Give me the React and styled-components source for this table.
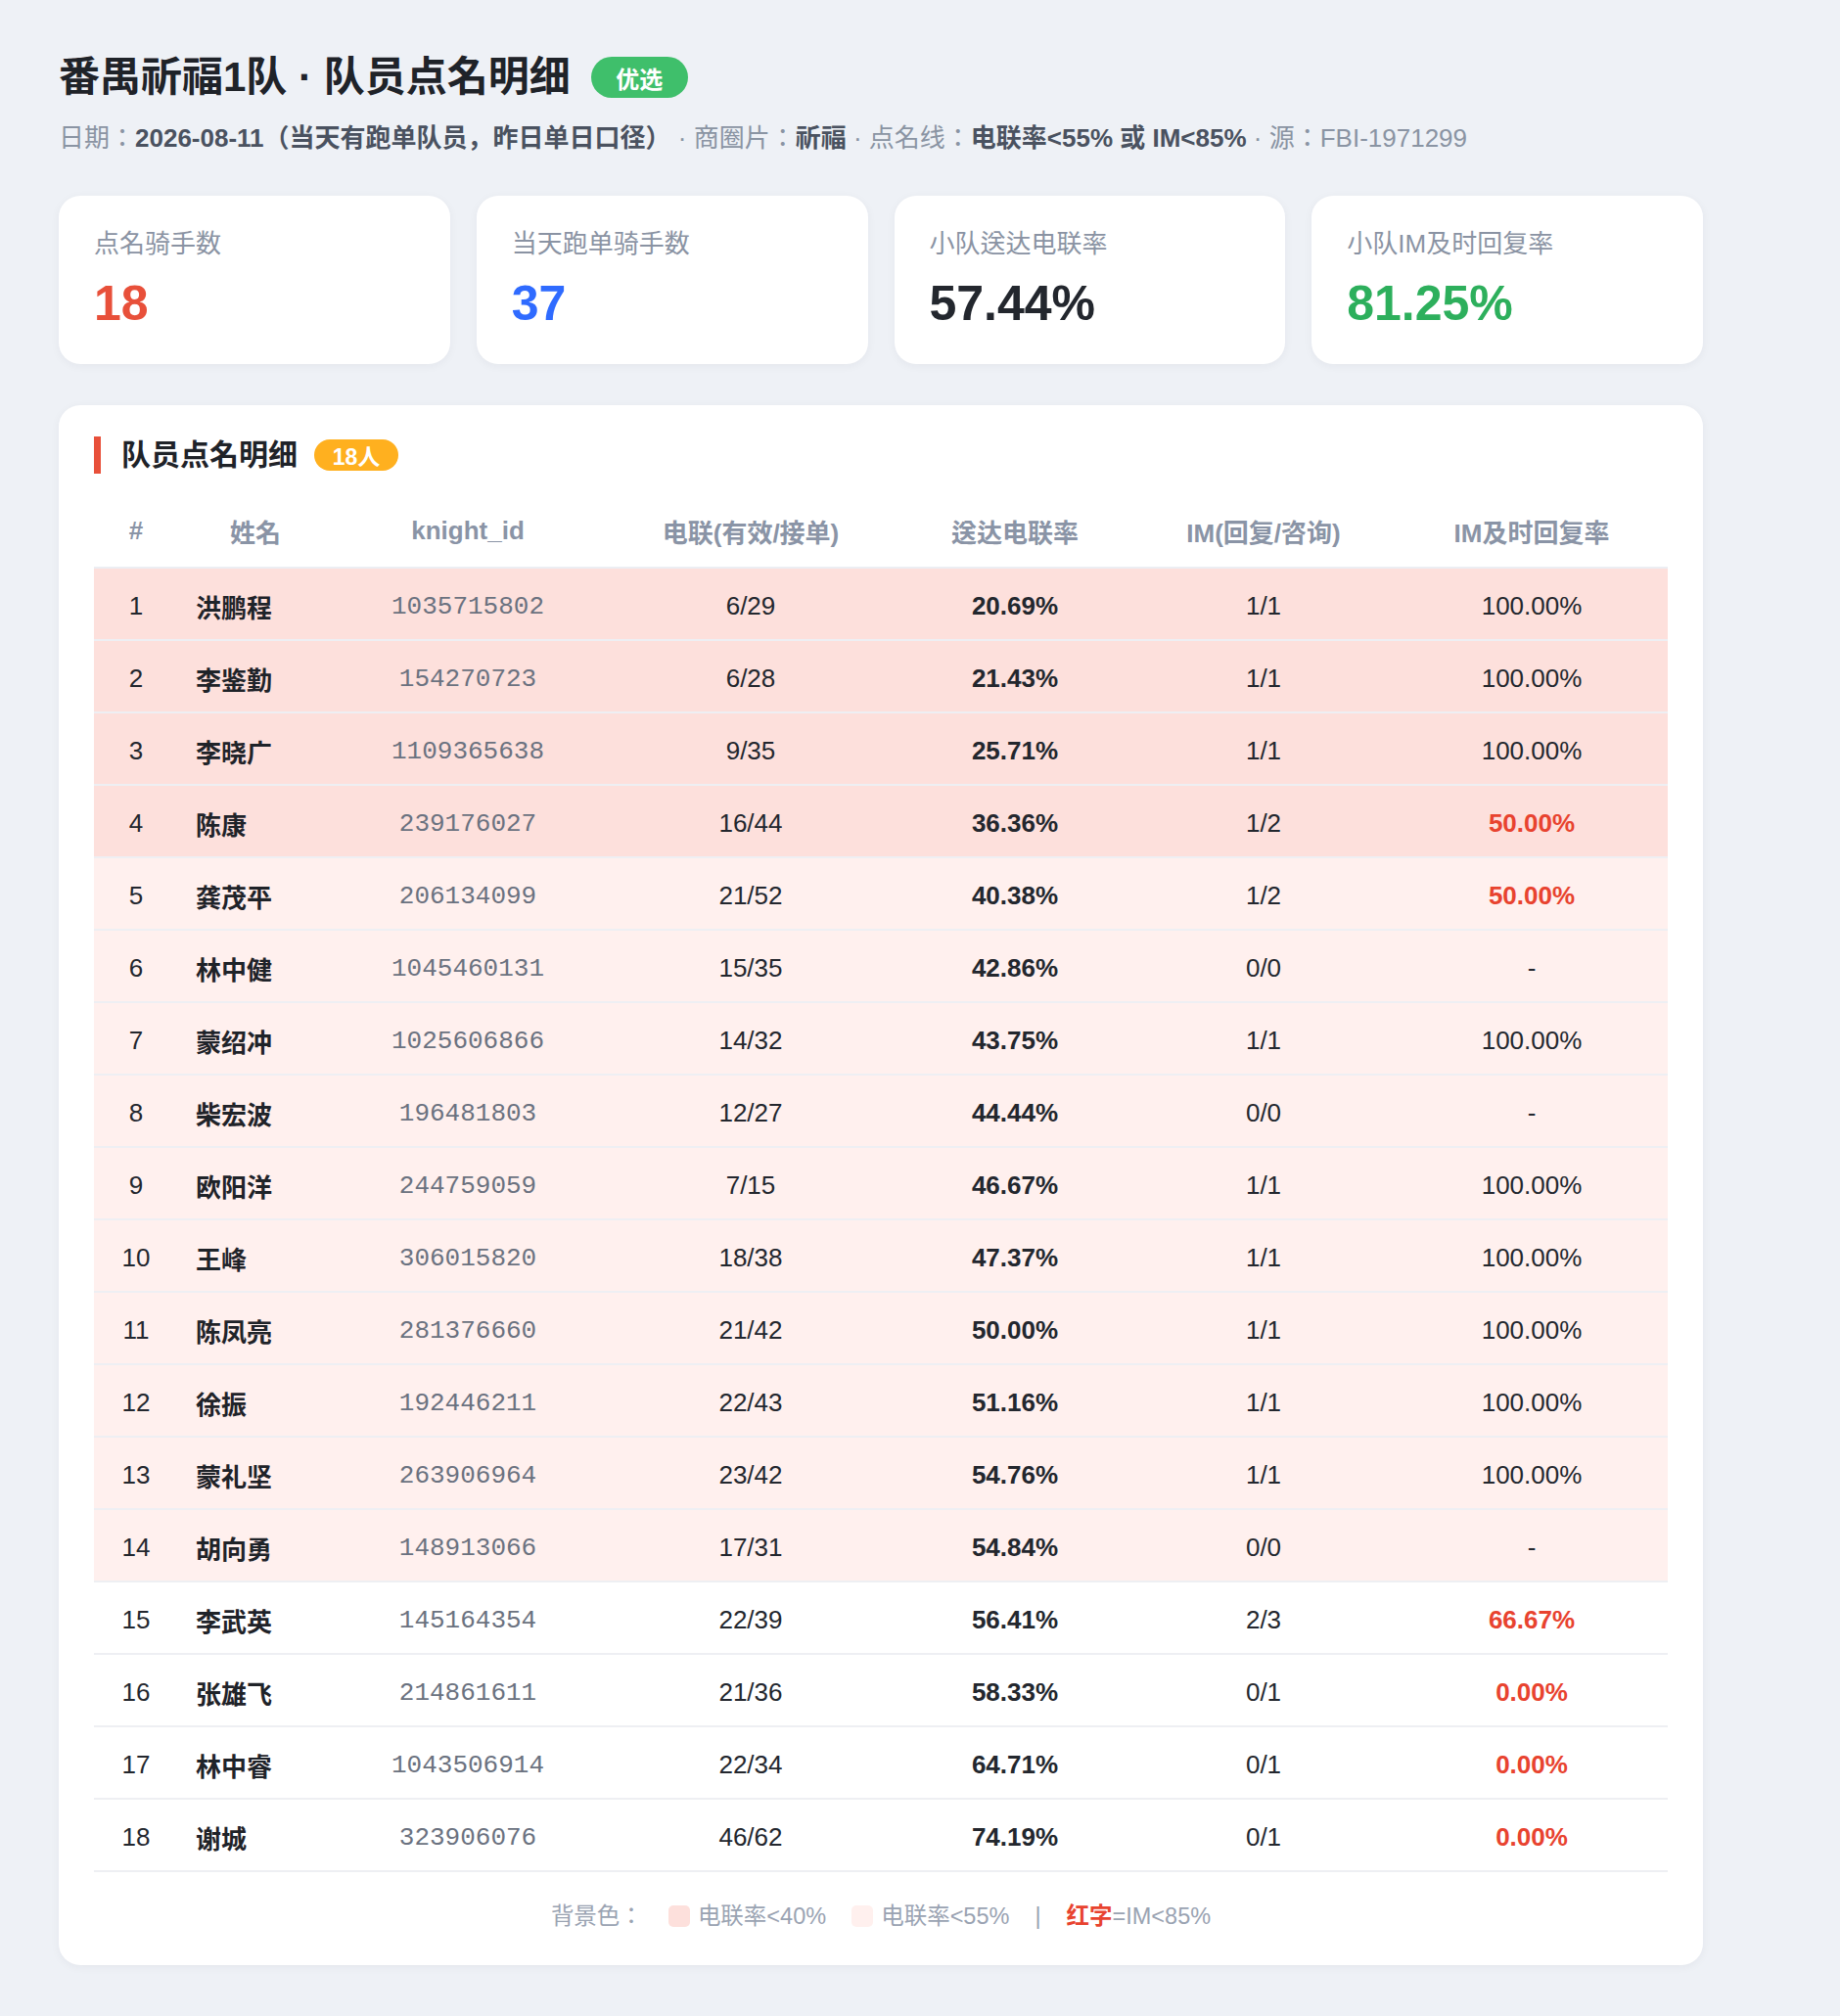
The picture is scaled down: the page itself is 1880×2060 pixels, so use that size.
import styled, { createGlobalStyle } from "styled-components";

const GlobalStyle = createGlobalStyle`
    html, body {
        margin: 0;
        padding: 0;
        background: #eef1f6;
    }

    body {
        font-family: "Liberation Sans", "Noto Sans CJK KR", sans-serif;
        color: #1f2329;
    }
`;

const riders = [
    [1, "洪鹏程", "1035715802", "6/29", "20.69%", "1/1", "100.00%", "strong", false],
    [2, "李鉴勤", "154270723", "6/28", "21.43%", "1/1", "100.00%", "strong", false],
    [3, "李晓广", "1109365638", "9/35", "25.71%", "1/1", "100.00%", "strong", false],
    [4, "陈康", "239176027", "16/44", "36.36%", "1/2", "50.00%", "strong", true],
    [5, "龚茂平", "206134099", "21/52", "40.38%", "1/2", "50.00%", "light", true],
    [6, "林中健", "1045460131", "15/35", "42.86%", "0/0", "-", "light", false],
    [7, "蒙绍冲", "1025606866", "14/32", "43.75%", "1/1", "100.00%", "light", false],
    [8, "柴宏波", "196481803", "12/27", "44.44%", "0/0", "-", "light", false],
    [9, "欧阳洋", "244759059", "7/15", "46.67%", "1/1", "100.00%", "light", false],
    [10, "王峰", "306015820", "18/38", "47.37%", "1/1", "100.00%", "light", false],
    [11, "陈凤亮", "281376660", "21/42", "50.00%", "1/1", "100.00%", "light", false],
    [12, "徐振", "192446211", "22/43", "51.16%", "1/1", "100.00%", "light", false],
    [13, "蒙礼坚", "263906964", "23/42", "54.76%", "1/1", "100.00%", "light", false],
    [14, "胡向勇", "148913066", "17/31", "54.84%", "0/0", "-", "light", false],
    [15, "李武英", "145164354", "22/39", "56.41%", "2/3", "66.67%", "none", true],
    [16, "张雄飞", "214861611", "21/36", "58.33%", "0/1", "0.00%", "none", true],
    [17, "林中睿", "1043506914", "22/34", "64.71%", "0/1", "0.00%", "none", true],
    [18, "谢城", "323906076", "46/62", "74.19%", "0/1", "0.00%", "none", true],
];

const stats = [
    { label: "点名骑手数", value: "18", color: "#e8503a" },
    { label: "当天跑单骑手数", value: "37", color: "#2f6bff" },
    { label: "小队送达电联率", value: "57.44%", color: "#23272e" },
    { label: "小队IM及时回复率", value: "81.25%", color: "#2daf5c" },
];

const colWidths = [86, 158, 276, 302, 238, 270, 278];

export default function App() {
    return (
        <Page>
            <GlobalStyle />
            <TitleRow>
                <Title>番禺祈福1队 · 队员点名明细</Title>
                <Tag>优选</Tag>
            </TitleRow>
            <Meta>
                日期：<b>2026-08-11（当天有跑单队员，昨日单日口径）</b> · 商圈片：<b>祈福</b> · 点名线：
                <b>电联率&lt;55% 或 IM&lt;85%</b> · 源：FBI-1971299
            </Meta>

            <Cards>
                {stats.map((s) => (
                    <Card key={s.label}>
                        <CardLabel>{s.label}</CardLabel>
                        <CardValue $color={s.color}>{s.value}</CardValue>
                    </Card>
                ))}
            </Cards>

            <Panel>
                <SectionHead>
                    <SectionTitle>队员点名明细</SectionTitle>
                    <CountBadge>18人</CountBadge>
                </SectionHead>

                <Table>
                    <colgroup>
                        {colWidths.map((w, i) => (
                            <col key={i} style={{ width: w }} />
                        ))}
                    </colgroup>
                    <thead>
                        <tr>
                            <Th>#</Th>
                            <Th>姓名</Th>
                            <Th>knight_id</Th>
                            <Th>电联(有效/接单)</Th>
                            <Th>送达电联率</Th>
                            <Th>IM(回复/咨询)</Th>
                            <Th>IM及时回复率</Th>
                        </tr>
                    </thead>
                    <tbody>
                        {riders.map(([no, name, id, call, rate, im, imRate, level, warn]) => (
                            <Row key={no} $level={level}>
                                <Td>{no}</Td>
                                <NameTd>{name}</NameTd>
                                <IdTd>{id}</IdTd>
                                <Td>{call}</Td>
                                <Td $bold>{rate}</Td>
                                <Td>{im}</Td>
                                <Td $warn={warn}>{imRate}</Td>
                            </Row>
                        ))}
                    </tbody>
                </Table>

                <Legend>
                    <span>背景色：</span>
                    <LegendItem>
                        <Swatch $bg="#fde0dc" />
                        电联率&lt;40%
                    </LegendItem>
                    <LegendItem>
                        <Swatch $bg="#fff0ee" />
                        电联率&lt;55%
                    </LegendItem>
                    <Divider>|</Divider>
                    <span>
                        <RedWord>红字</RedWord>=IM&lt;85%
                    </span>
                </Legend>
            </Panel>
        </Page>
    );
}

const Page = styled.div`
    width: 1680px;
    padding: 50px 60px 52px;
`;

const TitleRow = styled.div`
    display: flex;
    align-items: center;
    gap: 21px;
`;

const Title = styled.h1`
    margin: 0;
    font-size: 42px;
    line-height: 58px;
    font-weight: 700;
    color: #1f2329;
`;

const Tag = styled.span`
    display: inline-flex;
    align-items: center;
    justify-content: center;
    width: 99px;
    height: 42px;
    border-radius: 21px;
    background: #3fbf6b;
    color: #fff;
    font-size: 24px;
    font-weight: 700;
`;

const Meta = styled.div`
    margin-top: 15px;
    font-size: 26px;
    line-height: 36px;
    color: #8a94a3;

    b {
        color: #4a5260;
        font-weight: 700;
    }
`;

const Cards = styled.div`
    display: grid;
    grid-template-columns: repeat(4, 1fr);
    gap: 27px;
    margin-top: 41px;
`;

const Card = styled.div`
    background: #fff;
    border-radius: 22px;
    padding: 32px 36px 33px;
    box-shadow: 0 2px 10px rgba(30, 40, 60, 0.05);
`;

const CardLabel = styled.div`
    font-size: 26px;
    line-height: 34px;
    color: #8a93a3;
`;

const CardValue = styled.div`
    margin-top: 15px;
    font-size: 50px;
    line-height: 58px;
    font-weight: 700;
    color: ${(p) => p.$color};
`;

const Panel = styled.section`
    margin-top: 42px;
    background: #fff;
    border-radius: 22px;
    padding: 32px 36px 36px;
    box-shadow: 0 2px 10px rgba(30, 40, 60, 0.05);
`;

const SectionHead = styled.div`
    display: flex;
    align-items: center;
    gap: 17px;
    height: 38px;
    border-left: 7px solid #e8503a;
    padding-left: 21px;
`;

const SectionTitle = styled.h2`
    margin: 0;
    font-size: 30px;
    line-height: 38px;
    font-weight: 700;
    color: #1f2329;
`;

const CountBadge = styled.span`
    display: inline-flex;
    align-items: center;
    justify-content: center;
    width: 86px;
    height: 32px;
    border-radius: 16px;
    background: #ffb01f;
    color: #fff;
    font-size: 23px;
    font-weight: 700;
`;

const Table = styled.table`
    width: 1608px;
    margin-top: 26px;
    border-collapse: collapse;
    table-layout: fixed;
    font-size: 26px;
`;

const Th = styled.th`
    height: 64px;
    padding: 0 0 5px;
    text-align: center;
    font-weight: 700;
    color: #8a94a6;
    border-bottom: 2px solid #eceef3;
`;

const rowBg = { strong: "#fde0dc", light: "#fff0ee", none: "#fff" };

const Row = styled.tr`
    background: ${(p) => rowBg[p.$level]};
`;

const Td = styled.td`
    height: 67px;
    padding: 5px 0 0;
    text-align: center;
    color: ${(p) => (p.$warn ? "#e8432f" : "#23272e")};
    font-weight: ${(p) => (p.$bold || p.$warn ? 700 : 400)};
    border-bottom: 2px solid #eeeff3;
`;

const NameTd = styled(Td)`
    text-align: left;
    padding-left: 18px;
    font-weight: 700;
    color: #1f2329;
`;

const IdTd = styled(Td)`
    font-family: "Liberation Mono", monospace;
    color: #6b7280;
`;

const Legend = styled.div`
    display: flex;
    justify-content: center;
    align-items: center;
    gap: 26px;
    margin-top: 31px;
    font-size: 23.5px;
    line-height: 28px;
    color: #9aa3b2;
`;

const LegendItem = styled.span`
    display: inline-flex;
    align-items: center;
    gap: 8px;
`;

const Swatch = styled.i`
    display: inline-block;
    width: 22px;
    height: 22px;
    border-radius: 5px;
    background: ${(p) => p.$bg};
`;

const Divider = styled.span`
    color: #9aa3b2;
`;

const RedWord = styled.b`
    color: #e8432f;
    font-weight: 700;
`;
